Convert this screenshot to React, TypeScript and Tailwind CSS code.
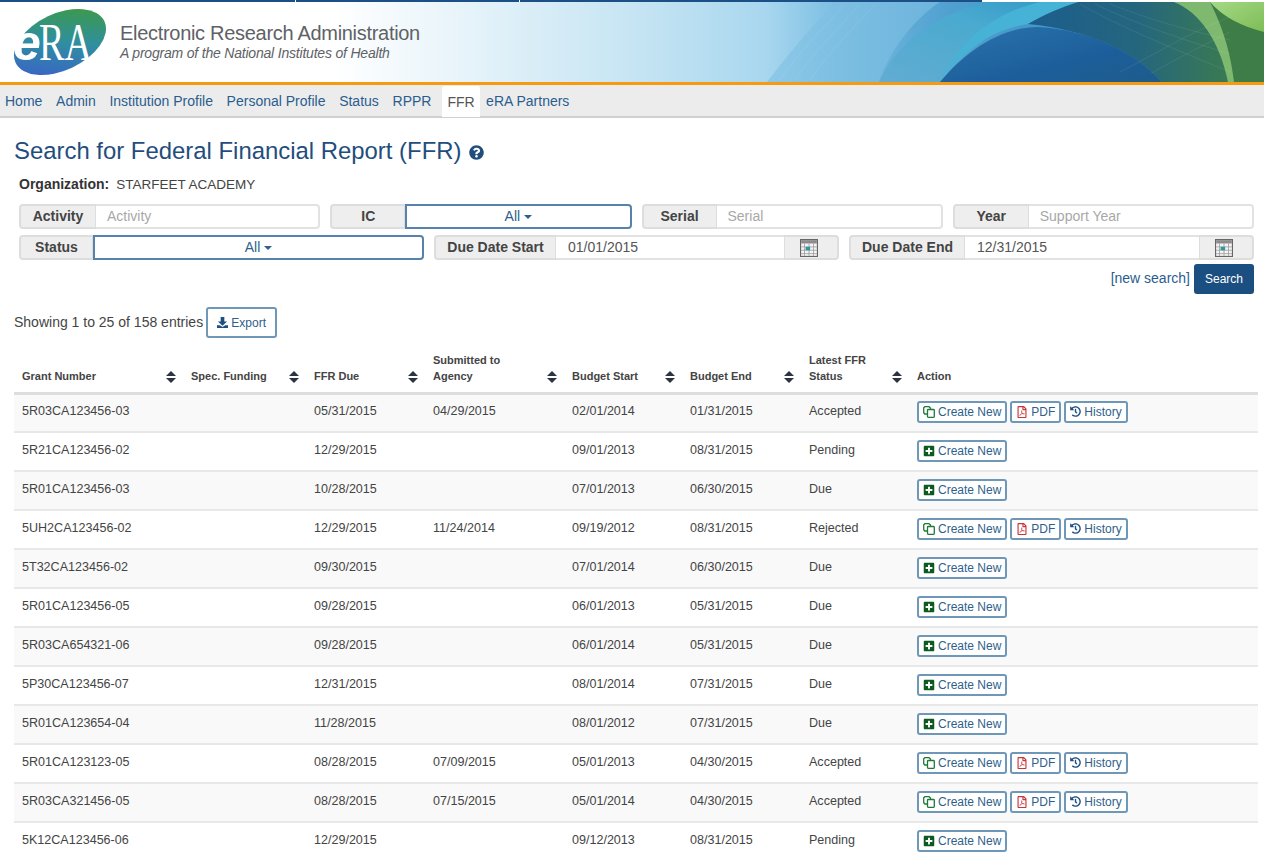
import { FaQuestionCircle, FaPlusSquare, FaRegFilePdf, FaHistory } from "react-icons/fa"

const rows = [
  ["5R03CA123456-03", "05/31/2015", "04/29/2015", "02/01/2014", "01/31/2015", "Accepted"],
  ["5R21CA123456-02", "12/29/2015", "", "09/01/2013", "08/31/2015", "Pending"],
  ["5R01CA123456-03", "10/28/2015", "", "07/01/2013", "06/30/2015", "Due"],
  ["5UH2CA123456-02", "12/29/2015", "11/24/2014", "09/19/2012", "08/31/2015", "Rejected"],
  ["5T32CA123456-02", "09/30/2015", "", "07/01/2014", "06/30/2015", "Due"],
  ["5R01CA123456-05", "09/28/2015", "", "06/01/2013", "05/31/2015", "Due"],
  ["5R03CA654321-06", "09/28/2015", "", "06/01/2014", "05/31/2015", "Due"],
  ["5P30CA123456-07", "12/31/2015", "", "08/01/2014", "07/31/2015", "Due"],
  ["5R01CA123654-04", "11/28/2015", "", "08/01/2012", "07/31/2015", "Due"],
  ["5R01CA123123-05", "08/28/2015", "07/09/2015", "05/01/2013", "04/30/2015", "Accepted"],
  ["5R03CA321456-05", "08/28/2015", "07/15/2015", "05/01/2014", "04/30/2015", "Accepted"],
  ["5K12CA123456-06", "12/29/2015", "", "09/12/2013", "08/31/2015", "Pending"],
]

const navItems = ["Home", "Admin", "Institution Profile", "Personal Profile", "Status", "RPPR"]

function Logo() {
  return (
    <svg width="110" height="80" viewBox="0 0 110 80" className="shrink-0">
      <defs>
        <linearGradient id="logoFill" x1="0" y1="1" x2="1" y2="0">
          <stop offset="0.1" stopColor="#3a62c8" />
          <stop offset="0.5" stopColor="#2f8f9f" />
          <stop offset="0.9" stopColor="#3d9a45" />
        </linearGradient>
      </defs>
      <ellipse cx="49" cy="40" rx="49" ry="28.4" transform="rotate(-25 49 40)" fill="url(#logoFill)" />
      <text x="28" y="58" fontFamily="'Liberation Serif', serif" fontSize="53" textLength="53" lengthAdjust="spacingAndGlyphs" fill="#fff">RA</text>
      <text x="2" y="58" fontFamily="'Liberation Sans', sans-serif" fontSize="50" fontWeight="700" fontStyle="italic" fill="#fff">e</text>
    </svg>
  )
}

function BannerArt() {
  return (
    <svg viewBox="0 0 624 80" preserveAspectRatio="none" className="flex-1 h-full block">
      <defs>
        <linearGradient id="sky" x1="0" x2="1" y1="0" y2="0">
          <stop offset="0" stopColor="#c5e4f3" />
          <stop offset="0.2" stopColor="#a9d7ef" />
          <stop offset="0.32" stopColor="#79bde2" />
          <stop offset="0.5" stopColor="#4f9fd0" />
          <stop offset="1" stopColor="#2c83b8" />
        </linearGradient>
        <linearGradient id="band" x1="0" x2="1" y1="1" y2="0">
          <stop offset="0" stopColor="#62acd2" />
          <stop offset="0.6" stopColor="#4aaacf" />
          <stop offset="1" stopColor="#2f96c8" />
        </linearGradient>
        <linearGradient id="deep" x1="0" x2="1" y1="0" y2="1">
          <stop offset="0" stopColor="#2b74ad" />
          <stop offset="0.6" stopColor="#1c5e9b" />
          <stop offset="1" stopColor="#1d5c8a" />
        </linearGradient>
        <linearGradient id="net" x1="0" x2="1" y1="0" y2="0">
          <stop offset="0" stopColor="#1c5d8e" />
          <stop offset="0.55" stopColor="#25667e" />
          <stop offset="1" stopColor="#3a7a52" />
        </linearGradient>
        <linearGradient id="lime" x1="0" x2="1" y1="0" y2="1">
          <stop offset="0" stopColor="#a5d986" />
          <stop offset="1" stopColor="#7dbd55" />
        </linearGradient>
      </defs>
      <rect width="624" height="80" fill="url(#sky)" />
      <path d="M127 80 C150 50 175 20 197 0 L300 0 C270 20 250 50 239 80 Z" fill="#7fc0e2" opacity="0.6" />
      <path d="M239 80 C255 45 290 15 345 0 L445 0 C390 5 335 35 300 80 Z" fill="url(#band)" />
      <path d="M345 0 L445 0 C420 6 405 12 388 22 C350 28 320 50 300 80 C320 40 350 12 400 0 Z" fill="#46b3d6" />
      <path d="M300 80 C325 50 360 25 398 25 C450 28 495 50 522 80 Z" fill="url(#deep)" />
      <path d="M388 22 C405 12 420 6 438 0 L534 0 C560 10 580 40 588 80 L522 80 C495 50 450 28 388 22 Z" fill="url(#net)" />
      <path d="M534 0 L624 0 L624 80 L588 80 C580 40 560 10 534 0 Z" fill="#3e7d48" />
      <path d="M534 0 C560 10 580 40 588 80 L594 80 C590 45 580 20 570 0 Z" fill="#8ec879" opacity="0.8" />
      <path d="M570 0 L624 0 L624 30 C600 24 582 14 570 0 Z" fill="url(#lime)" />
      <g stroke="#ffffff" strokeOpacity="0.13" strokeWidth="0.6" fill="none">
        <path d="M440 2 C480 25 530 45 590 70" />
        <path d="M455 2 C495 22 545 38 590 52" />
        <path d="M470 2 C510 18 555 30 590 38" />
        <path d="M480 70 C510 55 550 30 590 15" />
        <path d="M510 72 C530 60 560 45 590 30" />
        <path d="M140 78 C160 48 185 25 205 2" />
        <path d="M155 78 C175 48 200 25 220 2" />
        <path d="M170 78 C190 48 215 25 235 2" />
      </g>
    </svg>
  )
}

function SortIcon() {
  return (
    <svg width="10" height="12" viewBox="0 0 10 12" className="shrink-0" fill="#2b3440">
      <path d="M5 0 L10 5 H0 Z" />
      <path d="M5 12 L10 7 H0 Z" />
    </svg>
  )
}

function CalendarIcon() {
  return (
    <svg width="18" height="18" viewBox="0 0 16 16">
      <rect x="0.5" y="0.5" width="15" height="15" fill="#f4f4f4" stroke="#666" />
      <rect x="1" y="1" width="14" height="3" fill="#8c8c8c" />
      <path d="M1 7h14M1 10h14M1 13h14M4 4v11M8 4v11M12 4v11" stroke="#9a9a9a" strokeWidth="0.7" />
      <rect x="5" y="7" width="4" height="3" fill="#2b9a9a" />
    </svg>
  )
}

function CopyIcon() {
  return (
    <svg width="12" height="12" viewBox="0 0 12 12" fill="none" stroke="#1f7a3a" strokeWidth="1.3" className="shrink-0">
      <rect x="4.5" y="3.5" width="6.8" height="7.8" rx="0.8" />
      <path d="M4.5 8 H1.8 L0.7 6.8 V1.8 L1.8 0.7 H6 L7.5 2 V3.5" />
    </svg>
  )
}

function ExportIcon() {
  return (
    <svg width="11" height="11" viewBox="0 0 12 12" fill="#1d5080" className="shrink-0">
      <path d="M4 0 H8 V5 H11 L6 9.5 L1 5 H4 Z" />
      <path d="M0 9 H3 L6 11 L9 9 H12 V12 H0 Z" />
    </svg>
  )
}

function ActionButton({ icon, label }: { icon: React.ReactNode; label: string }) {
  return (
    <button className="h-[22px] px-[4px] flex items-center gap-[3px] border-2 border-[#6f97b8] rounded-[3px] bg-white text-[12px] text-[#2f5f8c] leading-none">
      {icon}
      {label}
    </button>
  )
}

function Addon({ label, width }: { label: string; width: string }) {
  return (
    <div className={`${width} shrink-0 h-full flex items-center justify-center bg-[#eeeeee] border-2 border-r border-[#dddddd] rounded-l-[4px] text-[14px] font-bold text-[#444444]`}>
      {label}
    </div>
  )
}

function TextGroup({ label, width, placeholder }: { label: string; width: string; placeholder: string }) {
  return (
    <div className="flex h-[25px]">
      <Addon label={label} width={width} />
      <div className="flex-1 flex items-center pl-[11px] border-2 border-l-0 border-[#e2e2e2] rounded-r-[4px] text-[14px] text-[#a8a8a8]">
        {placeholder}
      </div>
    </div>
  )
}

function SelectGroup({ label, width }: { label: string; width: string }) {
  return (
    <div className="flex h-[25px]">
      <Addon label={label} width={width} />
      <div className="flex-1 flex items-center justify-center gap-[4px] border-2 border-[#5583ac] rounded-r-[4px] text-[14px] text-[#2f5f8c]">
        All
        <span className="w-0 h-0 border-x-[4px] border-x-transparent border-t-[4px] border-t-[#2f5f8c]" />
      </div>
    </div>
  )
}

function DateGroup({ label, width, value }: { label: string; width: string; value: string }) {
  return (
    <div className="flex h-[25px]">
      <Addon label={label} width={width} />
      <div className="flex-1 flex items-center pl-[12px] border-y-2 border-[#e2e2e2] text-[14px] text-[#555555]">
        {value}
      </div>
      <div className="w-[55px] shrink-0 flex items-center justify-center pr-[4px] bg-[#eeeeee] border-2 border-l border-[#dddddd] rounded-r-[4px]">
        <CalendarIcon />
      </div>
    </div>
  )
}

function HeadCell({ lines, sort = true }: { lines: string[]; sort?: boolean }) {
  return (
    <th className="pl-[8px] pr-[7px] pb-[8px] align-bottom text-left font-bold text-[11px] leading-[16px] text-[#444444]">
      <div className="flex items-end justify-between">
        <span>
          {lines.map((l) => (
            <div key={l}>{l}</div>
          ))}
        </span>
        {sort && (
          <span className="mb-[1px]">
            <SortIcon />
          </span>
        )}
      </div>
    </th>
  )
}

export default function App() {
  return (
    <div className="h-[858px] overflow-hidden bg-white font-['Liberation_Sans',Arial,sans-serif] text-[#444444]">
      <div className="flex gap-[1px] h-[2px] w-[982px]">
        <div className="w-[295px] bg-[#1b4f86]" />
        <div className="w-[223px] bg-[#1b4f86]" />
        <div className="flex-1 bg-[#1b4f86]" />
      </div>
      <header className="flex h-[80px]">
        <div className="w-[640px] shrink-0 flex items-center pl-[11px] bg-[linear-gradient(to_right,#ffffff_0%,#ffffff_52%,#c5e4f3_100%)]">
          <Logo />
          <div className="ml-[-1px] mt-[-3px]">
            <div className="text-[20px] leading-[24px] tracking-[-0.3px] text-[#5e6266]">Electronic Research Administration</div>
            <div className="text-[14px] leading-[16px] tracking-[-0.2px] italic text-[#5e6266]">A program of the National Institutes of Health</div>
          </div>
        </div>
        <BannerArt />
      </header>
      <div className="h-[3px] bg-[#f79a10]" />
      <nav className="flex items-end h-[33px] bg-[#ececec] border-b-2 border-[#d0d0d0] pl-[5px] text-[14px] text-[#2a5d8f]">
        {navItems.map((item) => (
          <a key={item} className="mr-[13.7px] h-[29px] leading-[28px]">{item}</a>
        ))}
        <a className="ml-[-3px] mr-[6px] w-[38px] h-[31px] mb-[-1px] bg-white rounded-t-[3px] text-center leading-[32px] text-[#555555]">FFR</a>
        <a className="h-[29px] leading-[28px]">eRA Partners</a>
      </nav>

      <main>
        <h1 className="mt-[18px] ml-[14px] flex items-center text-[23.9px] leading-[30px] text-[#1f4e7d]">
          Search for Federal Financial Report (FFR)
          <FaQuestionCircle className="ml-[8px] mt-[3px] text-[#1f4e7d]" size={15} />
        </h1>

        <div className="mt-[8px] ml-[19px] flex items-baseline leading-[20px] text-[#444444]">
          <span className="text-[14px] font-bold text-[#333333]">Organization:</span>
          <span className="ml-[7px] text-[13.5px]">STARFEET ACADEMY</span>
        </div>

        <div className="mt-[9px] mx-[10px] pl-[9px] flex flex-col gap-[6px]">
          <div className="grid grid-cols-4 gap-[10px]">
            <TextGroup label="Activity" width="w-[77px]" placeholder="Activity" />
            <SelectGroup label="IC" width="w-[75px]" />
            <TextGroup label="Serial" width="w-[75px]" placeholder="Serial" />
            <TextGroup label="Year" width="w-[76px]" placeholder="Support Year" />
          </div>
          <div className="grid grid-cols-3 gap-[10px]">
            <SelectGroup label="Status" width="w-[74px]" />
            <DateGroup label="Due Date Start" width="w-[122px]" value="01/01/2015" />
            <DateGroup label="Due Date End" width="w-[116px]" value="12/31/2015" />
          </div>
        </div>

        <div className="mt-[4px] mr-[10px] flex items-center justify-end gap-[4px]">
          <a className="mb-[2px] text-[14px] text-[#2a5d8f]">[new search]</a>
          <button className="w-[60px] h-[30px] bg-[#1b4f82] rounded-[3px] text-[12px] text-white">Search</button>
        </div>

        <div className="mt-[13px] ml-[14px] flex items-center gap-[3px] text-[14px]">
          <span>Showing 1 to 25 of 158 entries</span>
          <button className="w-[71px] h-[31px] flex items-center justify-center gap-[3px] border-2 border-[#6f97b8] rounded-[3px] text-[12px] text-[#2f5f8c]">
            <ExportIcon />
            Export
          </button>
        </div>

        <table className="mt-[7px] ml-[14px] w-[1244px] table-fixed border-collapse text-[12.55px] text-[#444444]">
          <colgroup>
            <col className="w-[169px]" />
            <col className="w-[123px]" />
            <col className="w-[119px]" />
            <col className="w-[139px]" />
            <col className="w-[118px]" />
            <col className="w-[119px]" />
            <col className="w-[108px]" />
            <col className="w-[349px]" />
          </colgroup>
          <thead>
            <tr className="h-[48px] border-b-[3px] border-[#dddddd]">
              <HeadCell lines={["Grant Number"]} />
              <HeadCell lines={["Spec. Funding"]} />
              <HeadCell lines={["FFR Due"]} />
              <HeadCell lines={["Submitted to", "Agency"]} />
              <HeadCell lines={["Budget Start"]} />
              <HeadCell lines={["Budget End"]} />
              <HeadCell lines={["Latest FFR", "Status"]} />
              <HeadCell lines={["Action"]} sort={false} />
            </tr>
          </thead>
          <tbody>
            {rows.map((r, i) => (
              <tr key={r[0]} className={`h-[39px] border-b-2 border-[#e8e8e8] ${i % 2 === 0 ? "bg-[#f9f9f9]" : "bg-white"}`}>
                <td className="pl-[8px] pb-[2px]">{r[0]}</td>
                <td />
                <td className="pl-[8px] pb-[2px]">{r[1]}</td>
                <td className="pl-[8px] pb-[2px]">{r[2]}</td>
                <td className="pl-[8px] pb-[2px]">{r[3]}</td>
                <td className="pl-[8px] pb-[2px]">{r[4]}</td>
                <td className="pl-[8px] pb-[2px]">{r[5]}</td>
                <td className="pl-[8px] pb-[2px]">
                  {r[2] ? (
                    <div className="flex gap-[3px]">
                      <ActionButton icon={<CopyIcon />} label="Create New" />
                      <ActionButton icon={<FaRegFilePdf className="text-[#c8343a]" size={12} />} label="PDF" />
                      <ActionButton icon={<FaHistory className="text-[#1d4f80]" size={11} />} label="History" />
                    </div>
                  ) : (
                    <div className="flex">
                      <ActionButton icon={<FaPlusSquare className="text-[#0c5a20]" size={12} />} label="Create New" />
                    </div>
                  )}
                </td>
              </tr>
            ))}
          </tbody>
        </table>
      </main>
    </div>
  )
}
